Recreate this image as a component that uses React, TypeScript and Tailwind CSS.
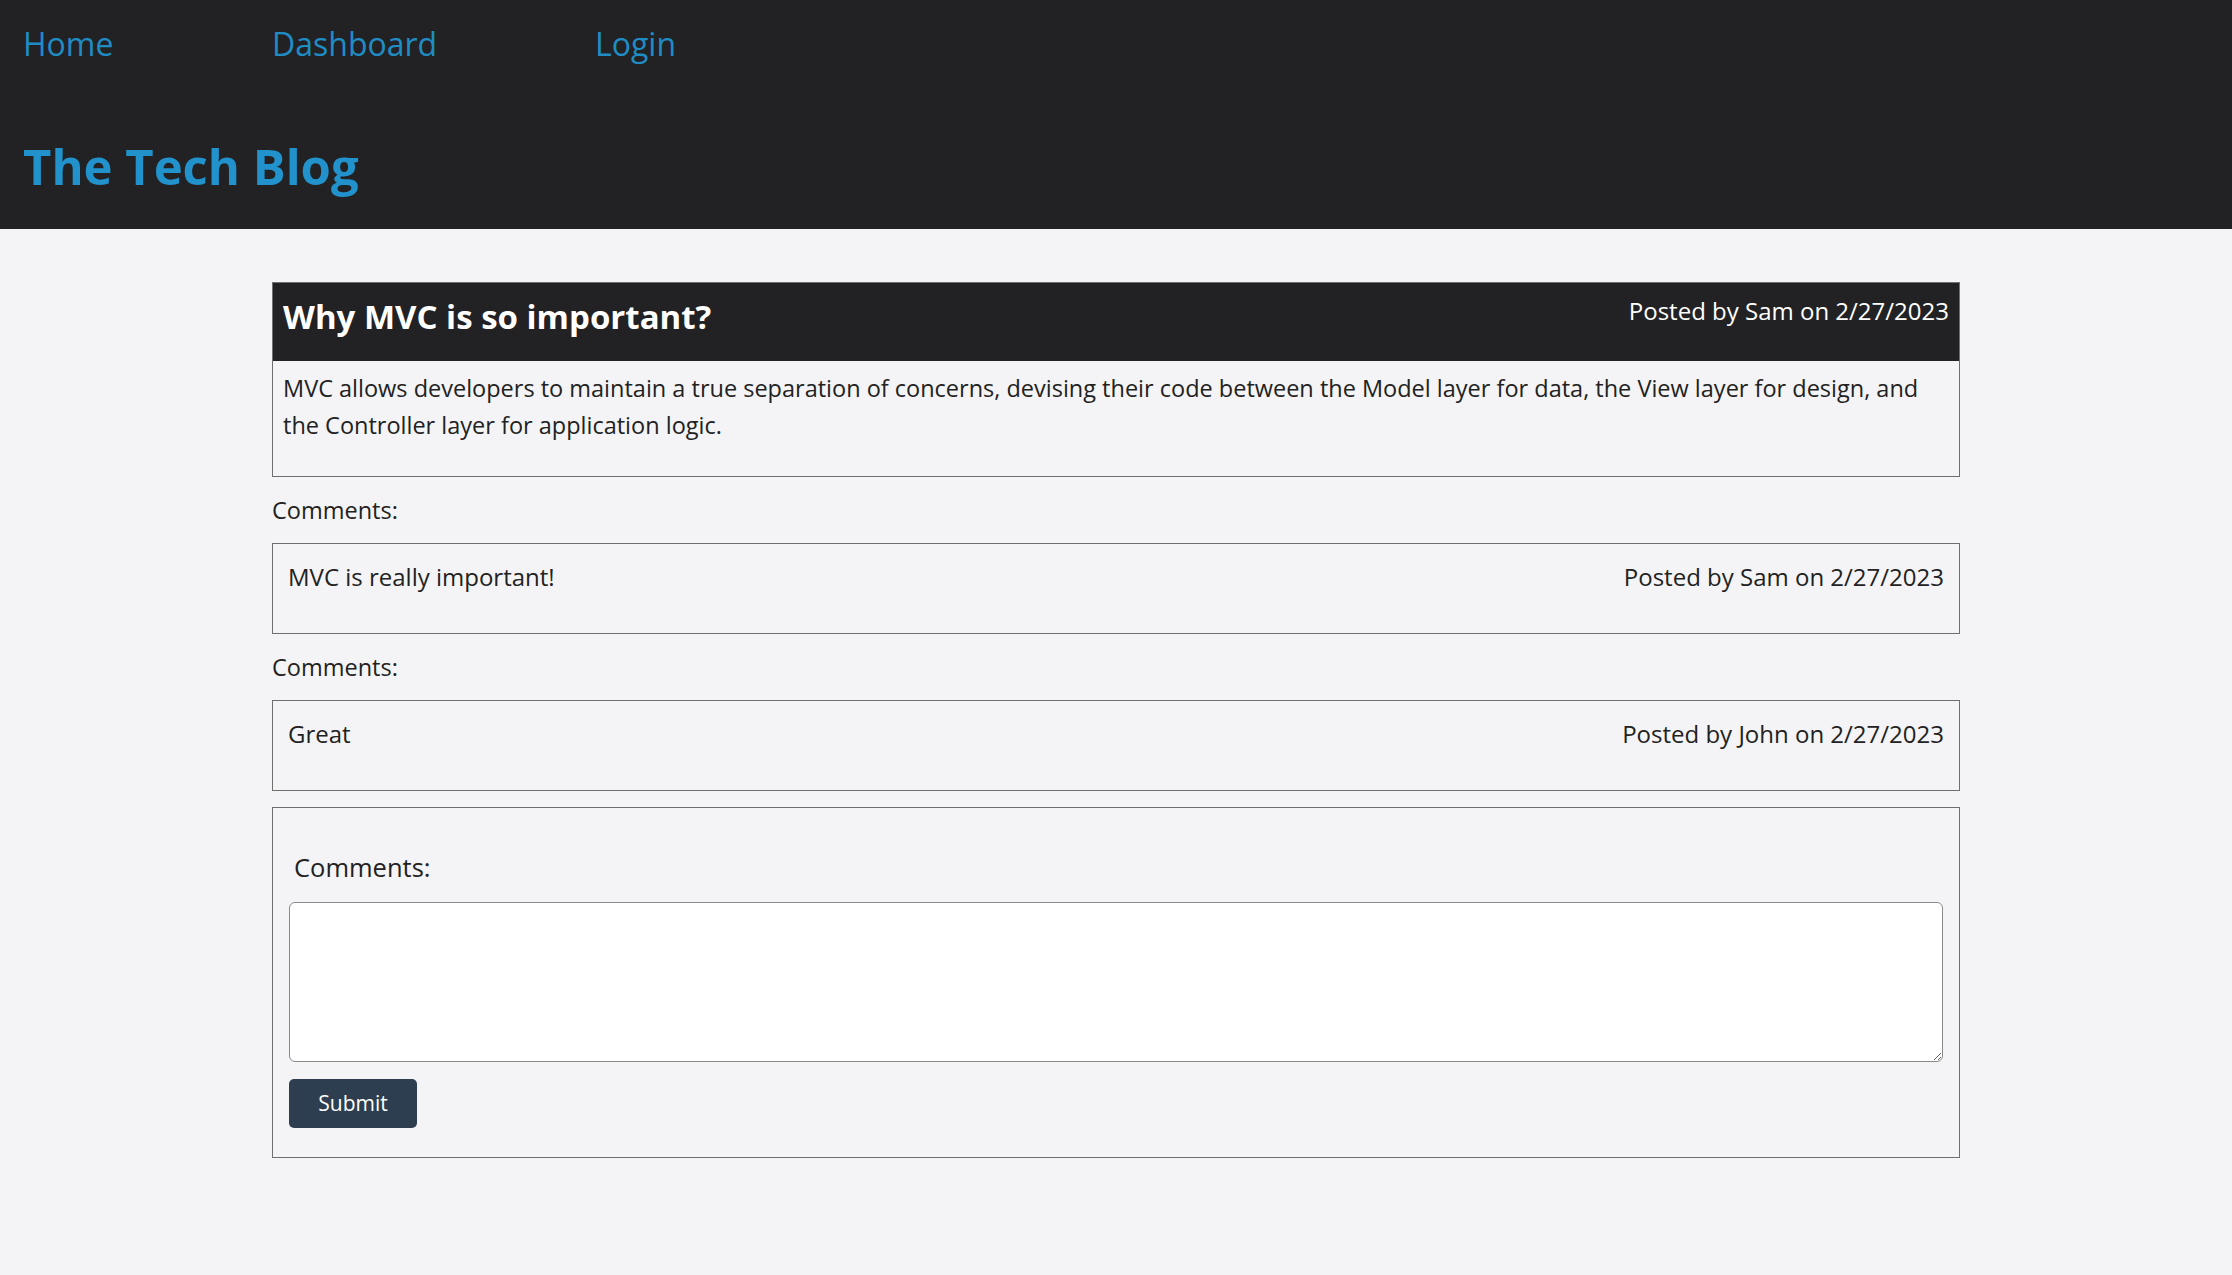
const font = "font-['Open_Sans','Noto_Sans',sans-serif]";

const CommentCard = ({ text, author }: { text: string; author: string }) => {
  return (
    <>
      <p className="mt-[15px] text-[23.5px] leading-[36px] text-[#222]">Comments:</p>
      <div className="mt-[15px] flex h-[91px] items-start justify-between border border-[#6f6f6f] px-[15px] pt-[15px] text-[24px] leading-[36px] text-[#222]">
        <span>{text}</span>
        <span>
          Posted by {author} on 2/27/2023
        </span>
      </div>
    </>
  );
};

const App = () => {
  return (
    <div className={`min-h-[1275px] bg-[#f4f4f6] ${font}`}>
      {/* 상단 헤더 */}
      <header className="h-[229px] bg-[#222224] px-[23px] pt-[19px]">
        <nav className="flex text-[32px] leading-[50px] text-[#1f8cc4]">
          <a href="/" className="w-[249px]">
            Home
          </a>
          <a href="/dashboard" className="w-[323px]">
            Dashboard
          </a>
          <a href="/login">Login</a>
        </nav>
        <h1 className="mt-[68px] text-[49px] font-bold leading-[58px] text-[#2192cb]">
          The Tech Blog
        </h1>
      </header>

      <main className="mx-auto w-[1688px] pt-[53px]">
        {/* 게시글 */}
        <article className="border border-[#6f6f6f]">
          <div className="flex h-[78px] items-start justify-between bg-[#222224] px-[10px] pt-[10px] text-white">
            <h2 className="mt-[3px] text-[33px] font-bold leading-[41px]">
              Why MVC is so important?
            </h2>
            <span className="text-[24px] leading-[36px]">Posted by Sam on 2/27/2023</span>
          </div>
          <p className="px-[10px] pb-[32px] pt-[9px] text-[23.5px] leading-[37px] text-[#222]">
            MVC allows developers to maintain a true separation of concerns, devising their code
            between the Model layer for data, the View layer for design, and the Controller layer
            for application logic.
          </p>
        </article>

        <CommentCard text="MVC is really important!" author="Sam" />
        <CommentCard text="Great" author="John" />

        {/* 댓글 작성 */}
        <form className="mt-[16px] border border-[#6f6f6f] px-[16px] pb-[29px] pt-[39px]">
          <label className="block pl-[5px] text-[25.5px] leading-[40px] text-[#222]">
            Comments:
          </label>
          <textarea className="mt-[15px] block h-[160px] w-full resize-y rounded-[6px] border border-[#8a8a8a] bg-white" />
          <button
            type="button"
            className="mt-[17px] h-[49px] w-[128px] rounded-[5px] bg-[#2c3e50] text-[21px] text-white"
          >
            Submit
          </button>
        </form>
      </main>
    </div>
  );
};

export default App;
